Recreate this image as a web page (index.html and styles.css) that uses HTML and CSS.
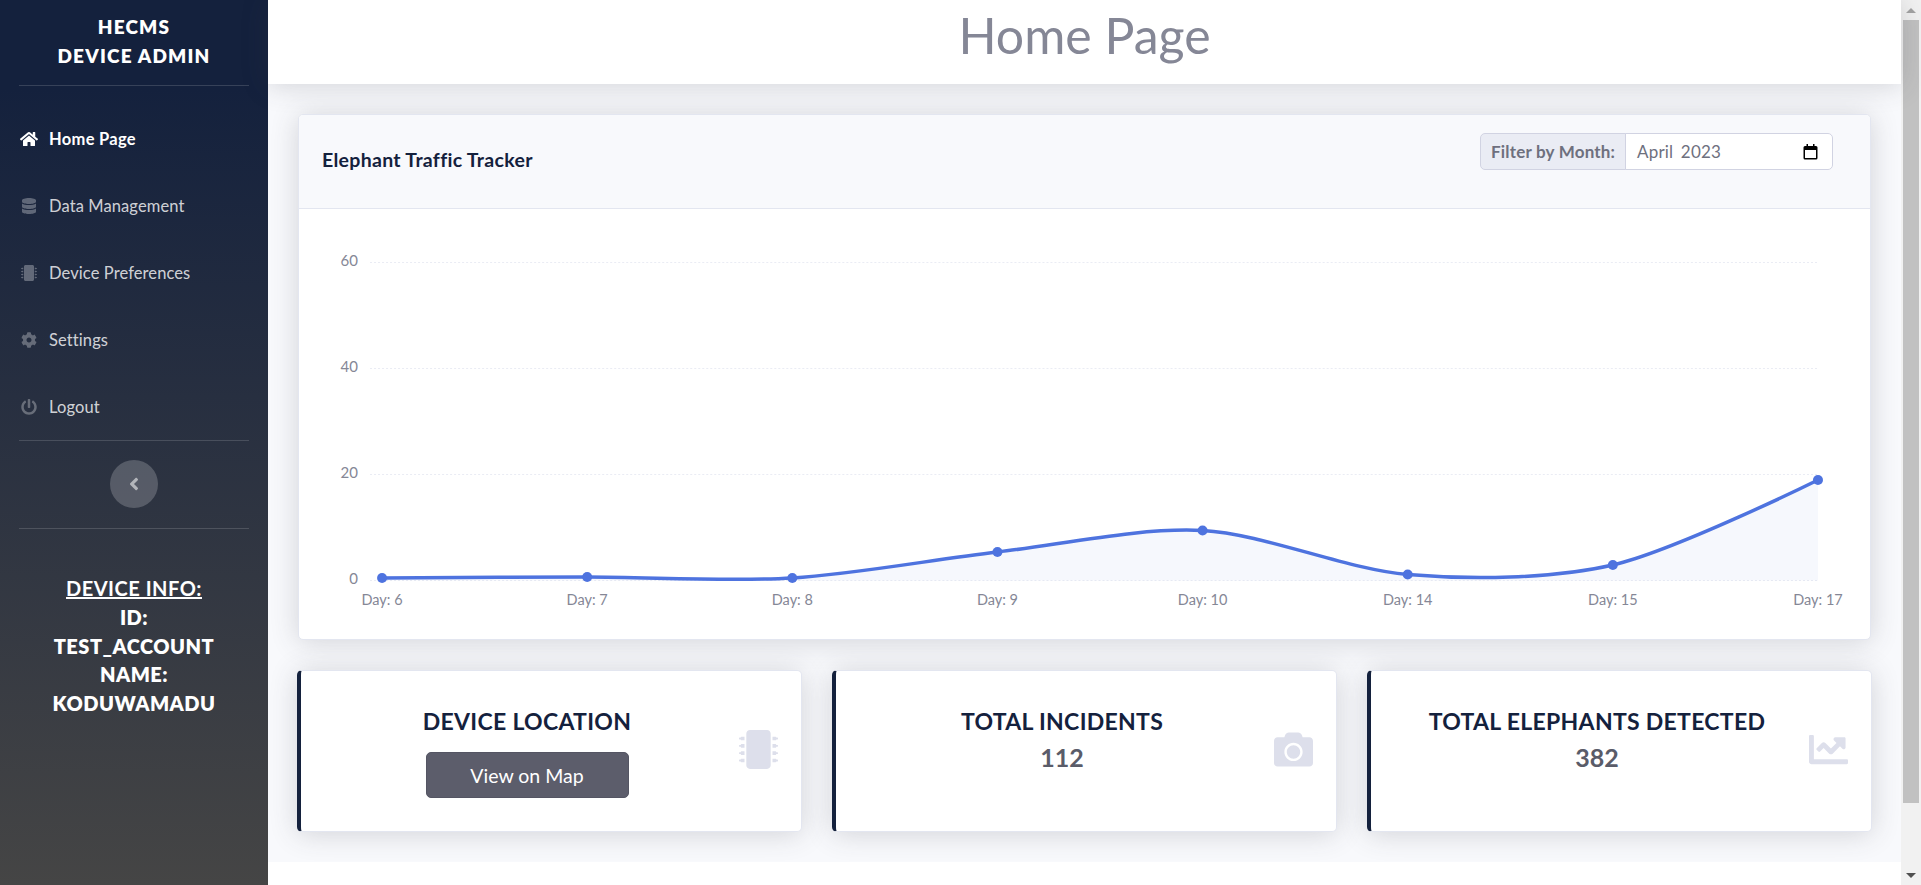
FILE: index.html
```html
<!DOCTYPE html>
<html lang="en">

<head>
	<meta charset="utf-8" />
	<meta name="viewport" content="width=device-width, initial-scale=1.0" />
	<title>HECMS Device Admin</title>
	<link rel="stylesheet" href="styles.css">
</head>

<body>
	<aside class="sidebar">
		<div class="brand">HECMS<br>DEVICE ADMIN</div>
		<hr class="side-rule">
		<nav class="side-nav">
			<a class="nav-link active" href="#">
				<svg class="nav-icon" viewBox="0 0 576 512"><path d="M280.37 148.26L96 300.11V464a16 16 0 0 0 16 16l112.06-.29a16 16 0 0 0 15.92-16V368a16 16 0 0 1 16-16h64a16 16 0 0 1 16 16v95.64a16 16 0 0 0 16 16.05L464 480a16 16 0 0 0 16-16V300L295.67 148.26a12.19 12.19 0 0 0-15.3 0zM571.6 251.47L488 182.56V44.05a12 12 0 0 0-12-12h-56a12 12 0 0 0-12 12v72.61L318.47 43a48 48 0 0 0-61 0L4.34 251.47a12 12 0 0 0-1.6 16.9l25.5 31A12 12 0 0 0 45.15 301l235.22-193.74a12.19 12.19 0 0 1 15.3 0L530.9 301a12 12 0 0 0 16.9-1.6l25.5-31a12 12 0 0 0-1.7-16.93z"/></svg>
				<span>Home Page</span>
			</a>
			<a class="nav-link" href="#">
				<svg class="nav-icon" viewBox="0 0 448 512"><path d="M448 73.143v45.714C448 159.143 347.667 192 224 192S0 159.143 0 118.857V73.143C0 32.857 100.333 0 224 0s224 32.857 224 73.143zM448 176v102.857C448 319.143 347.667 352 224 352S0 319.143 0 278.857V176c48.125 33.143 136.208 48.572 224 48.572S399.874 209.143 448 176zm0 160v102.857C448 479.143 347.667 512 224 512S0 479.143 0 438.857V336c48.125 33.143 136.208 48.572 224 48.572S399.874 369.143 448 336z"/></svg>
				<span>Data Management</span>
			</a>
			<a class="nav-link" href="#">
				<svg class="nav-icon" viewBox="0 0 512 512"><path d="M416 48v416c0 26.51-21.49 48-48 48H144c-26.51 0-48-21.49-48-48V48c0-26.51 21.49-48 48-48h224c26.51 0 48 21.49 48 48zm96 58v12a6 6 0 0 1-6 6h-18v6a6 6 0 0 1-6 6h-42V88h42a6 6 0 0 1 6 6v6h18a6 6 0 0 1 6 6zm0 96v12a6 6 0 0 1-6 6h-18v6a6 6 0 0 1-6 6h-42v-48h42a6 6 0 0 1 6 6v6h18a6 6 0 0 1 6 6zm0 96v12a6 6 0 0 1-6 6h-18v6a6 6 0 0 1-6 6h-42v-48h42a6 6 0 0 1 6 6v6h18a6 6 0 0 1 6 6zm0 96v12a6 6 0 0 1-6 6h-18v6a6 6 0 0 1-6 6h-42v-48h42a6 6 0 0 1 6 6v6h18a6 6 0 0 1 6 6zM30 376h42v48H30a6 6 0 0 1-6-6v-6H6a6 6 0 0 1-6-6v-12a6 6 0 0 1 6-6h18v-6a6 6 0 0 1 6-6zm0-96h42v48H30a6 6 0 0 1-6-6v-6H6a6 6 0 0 1-6-6v-12a6 6 0 0 1 6-6h18v-6a6 6 0 0 1 6-6zm0-96h42v48H30a6 6 0 0 1-6-6v-6H6a6 6 0 0 1-6-6v-12a6 6 0 0 1 6-6h18v-6a6 6 0 0 1 6-6zm0-96h42v48H30a6 6 0 0 1-6-6v-6H6a6 6 0 0 1-6-6v-12a6 6 0 0 1 6-6h18v-6a6 6 0 0 1 6-6z"/></svg>
				<span>Device Preferences</span>
			</a>
			<a class="nav-link" href="#">
				<svg class="nav-icon" viewBox="0 0 512 512"><path d="M487.4 315.7l-42.6-24.6c4.3-23.2 4.3-47 0-70.2l42.6-24.6c4.9-2.8 7.1-8.6 5.5-14-11.1-35.6-30-67.8-54.7-94.6-3.8-4.1-10-5.1-14.8-2.3L380.8 110c-17.9-15.4-38.5-27.3-60.8-35.1V25.8c0-5.6-3.9-10.5-9.4-11.7-36.7-8.2-74.3-7.8-109.2 0-5.5 1.2-9.4 6.1-9.4 11.7V75c-22.2 7.9-42.8 19.8-60.8 35.1L88.7 85.5c-4.9-2.8-11-1.9-14.8 2.3-24.7 26.7-43.6 58.9-54.7 94.6-1.7 5.4.6 11.2 5.5 14L67.3 221c-4.3 23.2-4.3 47 0 70.2l-42.6 24.6c-4.9 2.8-7.1 8.6-5.5 14 11.1 35.6 30 67.8 54.7 94.6 3.8 4.1 10 5.1 14.8 2.3l42.6-24.6c17.9 15.4 38.5 27.3 60.8 35.1v49.2c0 5.6 3.9 10.5 9.4 11.7 36.7 8.2 74.3 7.8 109.2 0 5.5-1.2 9.4-6.1 9.4-11.7v-49.2c22.2-7.9 42.8-19.8 60.8-35.1l42.6 24.6c4.9 2.8 11 1.9 14.8-2.3 24.7-26.7 43.6-58.9 54.7-94.6 1.5-5.5-.7-11.3-5.6-14.1zM256 336c-44.1 0-80-35.9-80-80s35.9-80 80-80 80 35.9 80 80-35.9 80-80 80z"/></svg>
				<span>Settings</span>
			</a>
			<a class="nav-link" href="#">
				<svg class="nav-icon" viewBox="0 0 512 512"><path d="M400 54.1c63 45 104 118.6 104 201.9 0 136.8-110.8 247.7-247.5 248C120 504.3 8.2 393 8 256.4 7.9 173.1 48.9 99.3 111.8 54.2c11.7-8.3 28-4.8 35 7.7L162.6 90c5.9 10.5 3.1 23.8-6.6 31-41.5 30.8-68 79.6-68 134.9-.1 92.3 74.5 168.1 168 168.1 91.6 0 168.6-74.2 168-169.1-.3-51.8-24.7-101.8-68.1-134-9.7-7.2-12.4-20.5-6.5-30.9l15.8-28.1c7-12.4 23.2-16.1 34.8-7.8zM296 264V24c0-13.3-10.7-24-24-24h-32c-13.3 0-24 10.7-24 24v240c0 13.3 10.7 24 24 24h32c13.3 0 24-10.7 24-24z"/></svg>
				<span>Logout</span>
			</a>
		</nav>
		<hr class="side-rule">
		<div class="toggle-row">
			<button class="side-toggle">
				<svg class="toggle-icon" viewBox="0 0 256 512"><path d="M31.700 239l136-136c9.400-9.400 24.600-9.400 33.900 0l22.600 22.600c9.400 9.400 9.400 24.600 0 33.900L127.900 256l96.400 96.400c9.400 9.400 9.400 24.600 0 33.900L201.700 409c-9.400 9.400-24.600 9.400-33.900 0l-136-136c-9.500-9.400-9.500-24.600-.1-34z"/></svg>
			</button>
		</div>
		<hr class="side-rule">
		<div class="device-info">
			<div class="device-info-head">DEVICE INFO:</div>
			<div>ID:</div>
			<div>TEST_ACCOUNT</div>
			<div>NAME:</div>
			<div>KODUWAMADU</div>
		</div>
	</aside>

	<div class="main">
		<header class="topbar">
			<h1>Home Page</h1>
		</header>

		<main class="content">
			<section class="card chart-card">
				<div class="card-head">
					<h2>Elephant Traffic Tracker</h2>
					<div class="month-filter">
						<span class="month-label">Filter by Month:</span>
						<div class="month-input">
							<span>April 2023</span>
							<svg class="calendar-icon" viewBox="0 0 15 16"><path fill-rule="evenodd" d="M3.500 0H5v2h5V0h1.500v2H13a1.500 1.500 0 0 1 1.500 1.500V14a1.500 1.500 0 0 1-1.500 1.500H2A1.500 1.500 0 0 1 .5 14V3.500A1.500 1.500 0 0 1 2 2h1.500zM2 6v8h11V6z"/></svg>
						</div>
					</div>
				</div>
				<div class="chart-body">
					<!-- viewBox is in page coordinates -->
					<svg class="chart" viewBox="299 209 1570 430" preserveAspectRatio="none">
						<g class="grid-lines">
							<line x1="370" y1="262.5" x2="1816" y2="262.5" />
							<line x1="370" y1="368.5" x2="1816" y2="368.5" />
							<line x1="370" y1="474.5" x2="1816" y2="474.5" />
							<line x1="370" y1="580.500" x2="1816" y2="580.500" />
						</g>
						<g class="y-labels">
							<text x="358" y="266.5">60</text>
							<text x="358" y="372.5">40</text>
							<text x="358" y="478.5">20</text>
							<text x="358" y="584.5">0</text>
						</g>
						<g class="x-labels">
							<text x="382" y="605">Day: 6</text>
							<text x="587" y="605">Day: 7</text>
							<text x="792" y="605">Day: 8</text>
							<text x="997" y="605">Day: 9</text>
							<text x="1202" y="605">Day: 10</text>
							<text x="1407" y="605">Day: 14</text>
							<text x="1612" y="605">Day: 15</text>
							<text x="1817" y="605">Day: 17</text>
						</g>
						<path class="area" d="M382 578C382 578 525.5 577 587 577C648.5 577 730.5 581.75 792 578C853.5 574.25 935.5 559.1 997 552C1058.5 544.9 1140.5 527.1 1202 530.5C1263.5 533.9 1345.5 569.3 1407 574.5C1468.5 579.7 1550.5 579.2 1612 565C1673.5 550.8 1817 480 1817 480V580.5H382Z" />
						<path class="line" d="M382 578C382 578 525.5 577 587 577C648.5 577 730.5 581.75 792 578C853.5 574.25 935.5 559.1 997 552C1058.5 544.9 1140.5 527.1 1202 530.5C1263.5 533.9 1345.5 569.3 1407 574.5C1468.5 579.7 1550.5 579.2 1612 565C1673.5 550.8 1817 480 1817 480" />
						<g class="dots">
							<circle cx="382" cy="578" r="5" />
							<circle cx="587" cy="577" r="5" />
							<circle cx="792" cy="578" r="5" />
							<circle cx="997" cy="552" r="5" />
							<circle cx="1202" cy="530.5" r="5" />
							<circle cx="1407" cy="574.5" r="5" />
							<circle cx="1612" cy="565" r="5" />
							<circle cx="1817" cy="480" r="5" />
						</g>
					</svg>
				</div>
			</section>

			<section class="stat-row">
				<div class="card stat-card">
					<div class="stat-text">
						<div class="stat-title">DEVICE LOCATION</div>
						<button class="map-btn">View on Map</button>
					</div>
					<svg class="stat-icon" viewBox="0 0 512 512"><path d="M416 48v416c0 26.51-21.49 48-48 48H144c-26.51 0-48-21.49-48-48V48c0-26.51 21.49-48 48-48h224c26.51 0 48 21.49 48 48zm96 58v12a6 6 0 0 1-6 6h-18v6a6 6 0 0 1-6 6h-42V88h42a6 6 0 0 1 6 6v6h18a6 6 0 0 1 6 6zm0 96v12a6 6 0 0 1-6 6h-18v6a6 6 0 0 1-6 6h-42v-48h42a6 6 0 0 1 6 6v6h18a6 6 0 0 1 6 6zm0 96v12a6 6 0 0 1-6 6h-18v6a6 6 0 0 1-6 6h-42v-48h42a6 6 0 0 1 6 6v6h18a6 6 0 0 1 6 6zm0 96v12a6 6 0 0 1-6 6h-18v6a6 6 0 0 1-6 6h-42v-48h42a6 6 0 0 1 6 6v6h18a6 6 0 0 1 6 6zM30 376h42v48H30a6 6 0 0 1-6-6v-6H6a6 6 0 0 1-6-6v-12a6 6 0 0 1 6-6h18v-6a6 6 0 0 1 6-6zm0-96h42v48H30a6 6 0 0 1-6-6v-6H6a6 6 0 0 1-6-6v-12a6 6 0 0 1 6-6h18v-6a6 6 0 0 1 6-6zm0-96h42v48H30a6 6 0 0 1-6-6v-6H6a6 6 0 0 1-6-6v-12a6 6 0 0 1 6-6h18v-6a6 6 0 0 1 6-6zm0-96h42v48H30a6 6 0 0 1-6-6v-6H6a6 6 0 0 1-6-6v-12a6 6 0 0 1 6-6h18v-6a6 6 0 0 1 6-6z"/></svg>
				</div>
				<div class="card stat-card">
					<div class="stat-text">
						<div class="stat-title">TOTAL INCIDENTS</div>
						<div class="stat-value">112</div>
					</div>
					<svg class="stat-icon" viewBox="0 0 512 512"><path d="M512 144v288c0 26.5-21.5 48-48 48H48c-26.5 0-48-21.5-48-48V144c0-26.5 21.5-48 48-48h88l12.3-32.9c7-18.7 24.9-31.1 44.9-31.1h125.5c20 0 37.9 12.4 44.9 31.1L376 96h88c26.5 0 48 21.5 48 48zM376 288c0-66.2-53.8-120-120-120s-120 53.8-120 120 53.8 120 120 120 120-53.8 120-120zm-32 0c0 48.5-39.5 88-88 88s-88-39.5-88-88 39.5-88 88-88 88 39.5 88 88z"/></svg>
				</div>
				<div class="card stat-card">
					<div class="stat-text">
						<div class="stat-title">TOTAL ELEPHANTS DETECTED</div>
						<div class="stat-value">382</div>
					</div>
					<svg class="stat-icon" viewBox="0 0 512 512"><path d="M496 384H64V80c0-8.84-7.16-16-16-16H16C7.16 64 0 71.16 0 80v336c0 17.67 14.33 32 32 32h464c8.84 0 16-7.16 16-16v-32c0-8.84-7.16-16-16-16zM464 96H345.94c-21.38 0-32.09 25.85-16.97 40.97l32.4 32.4L288 242.75l-73.37-73.37c-12.5-12.5-32.76-12.5-45.25 0l-68.69 68.69c-6.25 6.25-6.25 16.38 0 22.63l22.62 22.62c6.25 6.25 16.38 6.25 22.63 0L192 237.25l73.37 73.37c12.5 12.5 32.76 12.5 45.25 0l96-96 32.4 32.4c15.12 15.12 40.97 4.41 40.97-16.97V112c0-8.84-7.16-16-16-16z"/></svg>
				</div>
			</section>
		</main>

		<footer class="footer"></footer>
	</div>

	<div class="scrollbar">
		<span class="scroll-btn scroll-up"></span>
		<span class="scroll-thumb"></span>
		<span class="scroll-btn scroll-down"></span>
	</div>
</body>

</html>
```

FILE: styles.css
```css
html,
body {
	height: 100%;
}

body {
	margin: 0;
	display: flex;
	overflow: hidden;
	font-family: "Lato", "Noto Sans", sans-serif;
	color: #858796;
	background: #fff;
}

/* sidebar */
.sidebar {
	width: 268px;
	flex: none;
	background: linear-gradient(180deg, #14213d 10%, #454545 100%);
	color: #fff;
	text-align: center;
}

.brand {
	height: 85px;
	box-sizing: border-box;
	padding-top: 12px;
	font-size: 19px;
	line-height: 29px;
	font-weight: 800;
	letter-spacing: 1.2px;
}

.side-rule {
	margin: 0 19px;
	border: 0;
	border-top: 1px solid rgba(255, 255, 255, 0.15);
}

.side-nav {
	padding: 19px 0 0;
}

.nav-link {
	display: flex;
	align-items: center;
	gap: 11px;
	height: 67px;
	padding-left: 20px;
	font-size: 16.5px;
	letter-spacing: 0.1px;
	color: rgba(255, 255, 255, 0.8);
	text-decoration: none;
}

.nav-link.active {
	color: #fff;
	font-weight: 700;
	letter-spacing: 0.3px;
}

.nav-icon {
	width: 18px;
	height: 16px;
	fill: rgba(255, 255, 255, 0.3);
}

.active .nav-icon {
	fill: #fff;
}

.toggle-row {
	padding: 19px 0 20px;
}

.side-toggle {
	display: block;
	width: 48px;
	height: 48px;
	margin: 0 auto;
	padding: 0;
	border: 0;
	border-radius: 50%;
	background: rgba(255, 255, 255, 0.2);
}

.toggle-icon {
	display: block;
	width: 10px;
	height: 20px;
	margin: 0 auto;
	fill: rgba(255, 255, 255, 0.55);
}

.device-info {
	padding-top: 45px;
	font-size: 20px;
	line-height: 28.8px;
	font-weight: 800;
	letter-spacing: 0.5px;
}

.device-info-head {
	text-decoration: underline;
	font-weight: 700;
}

/* main column */
.main {
	flex: 1;
	display: flex;
	flex-direction: column;
	min-width: 0;
}

.topbar {
	position: relative;
	z-index: 1;
	height: 84px;
	flex: none;
	background: #fff;
	box-shadow: 0 2px 28px rgba(58, 59, 69, 0.2);
	text-align: center;
}

.topbar h1 {
	margin: 0;
	font-size: 50px;
	line-height: 71px;
	font-weight: 400;
	color: #858796;
}

.content {
	height: 778px;
	flex: none;
	box-sizing: border-box;
	padding: 30px;
	background: #f8f9fc;
}

.footer {
	flex: 1;
	background: #fff;
}

.card {
	background: #fff;
	border: 1px solid #e3e6f0;
	border-radius: 5px;
	box-shadow: 0 2px 28px rgba(58, 59, 69, 0.2);
}

.chart-card {
	height: 526px;
	box-sizing: border-box;
	overflow: hidden;
	display: flex;
	flex-direction: column;
}

.card-head {
	height: 94px;
	flex: none;
	box-sizing: border-box;
	display: flex;
	justify-content: space-between;
	padding: 0 37px 0 23px;
	background: #f8f9fc;
	border-bottom: 1px solid #e3e6f0;
}

.card-head h2 {
	margin: 0;
	padding-top: 33px;
	font-size: 19.5px;
	line-height: 24px;
	font-weight: 700;
	letter-spacing: 0.3px;
	color: #14213d;
}

.month-filter {
	display: flex;
	height: 37px;
	margin-top: 18px;
	font-size: 17px;
	letter-spacing: 0.2px;
	color: #6e707e;
}

.month-label {
	display: flex;
	align-items: center;
	padding-left: 10px;
	width: 146px;
	box-sizing: border-box;
	background: #eaecf4;
	border: 1px solid #d1d3e2;
	border-radius: 5px 0 0 5px;
	font-weight: 700;
	white-space: nowrap;
}

.month-input {
	width: 208px;
	box-sizing: border-box;
	margin-left: -1px;
	display: flex;
	align-items: center;
	justify-content: space-between;
	padding: 0 14px 0 11px;
	background: #fff;
	border: 1px solid #d1d3e2;
	border-radius: 0 5px 5px 0;
	word-spacing: 3px;
}

.calendar-icon {
	width: 15px;
	height: 16px;
	fill: #000;
}

.chart-body {
	flex: 1;
	min-height: 0;
}

.chart {
	display: block;
	width: 100%;
	height: 100%;
	font-size: 14.5px;
}

.grid-lines line {
	stroke: #eaecf4;
	stroke-width: 1;
	stroke-dasharray: 2 2;
}

.y-labels text {
	fill: #858796;
	text-anchor: end;
	font-size: 15px;
}

.x-labels text {
	fill: #858796;
	text-anchor: middle;
}

.area {
	fill: rgba(78, 115, 223, 0.05);
}

.line {
	fill: none;
	stroke: #4e73df;
	stroke-width: 3.5;
}

.dots circle {
	fill: #4e73df;
}

/* stat cards */
.stat-row {
	display: grid;
	grid-template-columns: repeat(3, 1fr);
	gap: 30px;
	margin: 30px -1px 0;
}

.stat-card {
	height: 162px;
	box-sizing: border-box;
	display: flex;
	align-items: center;
	gap: 11px;
	padding: 0 23px 0 25px;
	border-left: 4px solid #14213d;
}

.stat-text {
	flex: 1;
	align-self: flex-start;
	padding-top: 36px;
	text-align: center;
}

.stat-title {
	font-size: 23px;
	line-height: 28px;
	font-weight: 700;
	letter-spacing: 0.3px;
	color: #14213d;
}

.stat-value {
	margin-top: 8px;
	font-size: 25px;
	line-height: 28px;
	font-weight: 700;
	color: #5a5c69;
}

.map-btn {
	display: block;
	width: 203px;
	height: 46px;
	margin: 17px auto 0;
	background: #5c5d6b;
	border: 1px solid #545563;
	border-radius: 5px;
	font: inherit;
	font-size: 19.5px;
	color: #fff;
}

.stat-icon {
	width: 39px;
	height: 39px;
	flex: none;
	margin-bottom: 3px;
	fill: #dddfeb;
}

/* window scrollbar */
.scrollbar {
	width: 20px;
	flex: none;
	display: flex;
	flex-direction: column;
	align-items: center;
	background: #f1f1f1;
}

.scroll-btn {
	height: 20px;
	flex: none;
	display: flex;
	align-items: center;
	justify-content: center;
}

.scroll-up::before {
	content: "";
	border: 5px solid transparent;
	border-top: 0;
	border-bottom: 5px solid #a3a3a3;
}

.scroll-down {
	margin-top: auto;
}

.scroll-down::before {
	content: "";
	border: 5px solid transparent;
	border-bottom: 0;
	border-top: 5px solid #505050;
}

.scroll-thumb {
	width: 16px;
	height: 783px;
	flex: none;
	background: #c1c1c1;
}
```
